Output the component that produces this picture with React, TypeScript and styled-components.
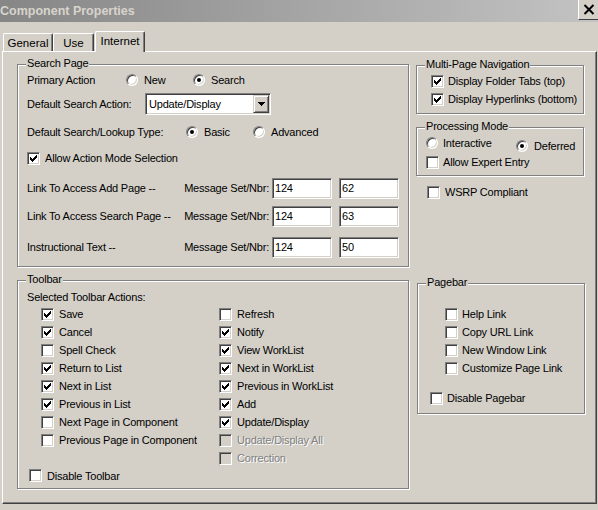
import React from "react";
import styled, { createGlobalStyle } from "styled-components";

const GlobalStyle = createGlobalStyle`
  html, body { margin: 0; padding: 0; background: #d4d0c8; }
  * { box-sizing: border-box; }
`;

const Window = styled.div`
  width: 598px;
  height: 510px;
  overflow: hidden;
  background: #d4d0c8;
  font-family: "Liberation Sans", Arial, sans-serif;
  font-size: 11px;
  letter-spacing: -0.2px;
  color: #000;
  display: flex;
  flex-direction: column;
`;

const TitleBar = styled.div`
  height: 22px;
  flex: none;
  display: flex;
  align-items: center;
  justify-content: space-between;
  background: linear-gradient(to right, #868686, #c3c3c3);
`;

const TitleText = styled.span`
  margin-left: 0;
  font-weight: bold;
  font-size: 12.5px;
  letter-spacing: 0;
  color: #d8d4cc;
  white-space: nowrap;
`;

const CloseButton = styled.div`
  width: 20px;
  height: 20px;
  align-self: flex-start;
  display: flex;
  align-items: center;
  justify-content: center;
  background: #d4d0c8;
  border-left: 1px solid #fff;
  border-bottom: 1px solid #404040;
`;

const TabStrip = styled.div`
  height: 29px;
  flex: none;
  display: flex;
  align-items: flex-end;
  padding-left: 3px;
  position: relative;
  z-index: 1;
`;

const Tab = styled.div<{ $active?: boolean; $w: number; $ml?: number }>`
  width: ${(p) => p.$w}px;
  height: ${(p) => (p.$active ? 21 : 18)}px;
  margin-left: ${(p) => p.$ml ?? 0}px;
  margin-bottom: ${(p) => (p.$active ? -1 : 0)}px;
  background: #d4d0c8;
  border-top: 1px solid #fff;
  border-left: 1px solid #fff;
  border-right: 1px solid #404040;
  box-shadow: inset -1px 0 #808080;
  border-top-left-radius: 2px;
  border-top-right-radius: 2px;
  display: flex;
  justify-content: center;
  padding-top: 3px;
  line-height: 13px;
  font-size: 11.5px;
  letter-spacing: 0;
  white-space: nowrap;
`;

const Panel = styled.div`
  margin-left: 2px;
  width: 595px;
  height: 453px;
  flex: none;
  border-top: 1px solid #fff;
  border-left: 1px solid #fff;
  border-right: 1px solid #404040;
  border-bottom: 1px solid #404040;
  box-shadow: inset -1px -1px #808080;
  display: grid;
  grid-template-columns: 392px 168px;
  column-gap: 7px;
  align-items: start;
  padding: 12px 0 0 14px;
`;

const Column = styled.div`
  display: flex;
  flex-direction: column;
`;

const Group = styled.div<{ $h: number; $mt?: number; $ml?: number; $w?: number }>`
  position: relative;
  width: ${(p) => (p.$w ? `${p.$w}px` : "100%")};
  height: ${(p) => p.$h}px;
  margin-top: ${(p) => p.$mt ?? 0}px;
  margin-left: ${(p) => p.$ml ?? 0}px;
  border: 1px solid #808080;
  box-shadow: inset 1px 1px #fff, 1px 1px #fff;
  display: flex;
  flex-direction: column;
  flex: none;
`;

const Legend = styled.span`
  position: absolute;
  top: -8px;
  left: 8px;
  padding: 0 1px;
  line-height: 13px;
  background: #d4d0c8;
  white-space: nowrap;
`;

const Row = styled.div<{ $h: number; $mt?: number; $pl?: number }>`
  display: flex;
  align-items: center;
  flex: none;
  height: ${(p) => p.$h}px;
  margin-top: ${(p) => p.$mt ?? 0}px;
  padding-left: ${(p) => p.$pl ?? 0}px;
  white-space: nowrap;
`;

const Label = styled.span<{ $w?: number; $right?: boolean }>`
  flex: none;
  width: ${(p) => (p.$w ? `${p.$w}px` : "auto")};
  text-align: ${(p) => (p.$right ? "right" : "left")};
  white-space: nowrap;
`;

const Option = styled.label<{ $w?: number; $gap: number; $disabled?: boolean; $drop?: number }>`
  display: flex;
  align-items: center;
  flex: none;
  gap: ${(p) => p.$gap}px;
  width: ${(p) => (p.$w ? `${p.$w}px` : "auto")};
  padding-top: ${(p) => p.$drop ?? 0}px;
  white-space: nowrap;
  color: ${(p) => (p.$disabled ? "#808080" : "#000")};
  text-shadow: ${(p) => (p.$disabled ? "1px 1px 0 #fff" : "none")};
`;

const Box = styled.span<{ $disabled?: boolean }>`
  width: 13px;
  height: 13px;
  flex: none;
  display: flex;
  align-items: center;
  justify-content: center;
  background: ${(p) => (p.$disabled ? "#d4d0c8" : "#fff")};
  border: 1px solid;
  border-color: #808080 #fff #fff #808080;
  box-shadow: inset 1px 1px #404040, inset -1px -1px #d4d0c8;
`;

const RadioCircle = styled(Box)`
  width: 12px;
  height: 12px;
  border-radius: 50%;
`;

const Dot = styled.span`
  width: 4px;
  height: 4px;
  border-radius: 50%;
  background: #000;
`;

const Select = styled.div`
  width: 126px;
  height: 22px;
  flex: none;
  background: #fff;
  border: 1px solid;
  border-color: #808080 #fff #fff #808080;
  box-shadow: inset 1px 1px #404040, inset -1px -1px #d4d0c8;
  display: flex;
  align-items: center;
  padding: 1px;
`;

const SelectText = styled.span`
  flex: 1;
  padding-left: 2px;
`;

const SelectButton = styled.span`
  width: 16px;
  height: 18px;
  flex: none;
  background: #d4d0c8;
  border: 1px solid;
  border-color: #d4d0c8 #404040 #404040 #d4d0c8;
  box-shadow: inset 1px 1px #fff, inset -1px -1px #808080;
  display: flex;
  align-items: center;
  justify-content: center;
`;

const TextBox = styled.input<{ $ml: number }>`
  width: 60px;
  height: 21px;
  flex: none;
  margin: 0 0 0 ${(p) => p.$ml}px;
  padding: 0 0 0 2px;
  background: #fff;
  border: 1px solid;
  border-color: #808080 #fff #fff #808080;
  box-shadow: inset 1px 1px #404040, inset -1px -1px #d4d0c8;
  font: inherit;
  letter-spacing: inherit;
  color: #000;
  outline: none;
`;

const CheckColumns = styled.div`
  display: flex;
  padding-left: 23px;
  flex: none;
`;

const CheckColumn = styled.div<{ $w?: number }>`
  display: flex;
  flex-direction: column;
  width: ${(p) => (p.$w ? `${p.$w}px` : "auto")};
`;

const CheckMark = () => (
  <svg width="7" height="7" viewBox="0 0 7 7" shapeRendering="crispEdges">
    <path
      fill="#000"
      d="M6 0h1v1h-1z M5 1h2v1h-2z M0 2h1v1h-1z M4 2h3v1h-3z M0 3h2v1h-2z M3 3h3v1h-3z M0 4h5v1h-5z M1 5h3v1h-3z M2 6h1v1h-1z"
    />
  </svg>
);

const Check: React.FC<{ label: string; checked?: boolean; disabled?: boolean; gap?: number }> = ({
  label,
  checked,
  disabled,
  gap = 5,
}) => (
  <Option $gap={gap} $disabled={disabled}>
    <Box $disabled={disabled}>{checked && <CheckMark />}</Box>
    <span>{label}</span>
  </Option>
);

const Radio: React.FC<{ label: string; checked?: boolean; w?: number; gap?: number; drop?: number }> = ({
  label,
  checked,
  w,
  gap = 6,
  drop,
}) => (
  <Option $gap={gap} $w={w} $drop={drop}>
    <RadioCircle>{checked && <Dot />}</RadioCircle>
    <span>{label}</span>
  </Option>
);

const MsgRow: React.FC<{ label: string; a: string; b: string; mt: number }> = ({ label, a, b, mt }) => (
  <Row $h={22} $mt={mt} $pl={9}>
    <Label $w={155}>{label}</Label>
    <Label $w={87} $right>
      Message Set/Nbr:
    </Label>
    <TextBox $ml={3} value={a} readOnly />
    <TextBox $ml={7} value={b} readOnly />
  </Row>
);

const toolbarLeft: [string, boolean][] = [
  ["Save", true],
  ["Cancel", true],
  ["Spell Check", false],
  ["Return to List", true],
  ["Next in List", true],
  ["Previous in List", true],
  ["Next Page in Component", false],
  ["Previous Page in Component", false],
];

const toolbarRight: [string, boolean, boolean][] = [
  ["Refresh", false, false],
  ["Notify", true, false],
  ["View WorkList", true, false],
  ["Next in WorkList", true, false],
  ["Previous in WorkList", true, false],
  ["Add", true, false],
  ["Update/Display", true, false],
  ["Update/Display All", false, true],
  ["Correction", false, true],
];

const pagebarItems = ["Help Link", "Copy URL Link", "New Window Link", "Customize Page Link"];

export default function App() {
  return (
    <Window>
      <GlobalStyle />
      <TitleBar>
        <TitleText>Component Properties</TitleText>
        <CloseButton>
          <svg width="12" height="11" viewBox="0 0 12 11">
            <path d="M1.5 1 L10.5 10 M10.5 1 L1.5 10" stroke="#000" strokeWidth="2" />
          </svg>
        </CloseButton>
      </TitleBar>
      <TabStrip>
        <Tab $w={50}>General</Tab>
        <Tab $w={41}>Use</Tab>
        <Tab $w={50} $ml={1} $active>
          Internet
        </Tab>
      </TabStrip>
      <Panel>
        <Column>
          <Group $h={203}>
            <Legend>Search Page</Legend>
            <Row $h={20} $mt={5} $pl={9}>
              <Label $w={99}>Primary Action</Label>
              <Radio label="New" w={67} />
              <Radio label="Search" checked />
            </Row>
            <Row $h={22} $mt={3} $pl={9}>
              <Label $w={118}>Default Search Action:</Label>
              <Select>
                <SelectText>Update/Display</SelectText>
                <SelectButton>
                  <svg width="7" height="4" viewBox="0 0 7 4" shapeRendering="crispEdges">
                    <path d="M0 0h7v1h-7z M1 1h5v1h-5z M2 2h3v1h-3z M3 3h1v1h-1z" fill="#000" />
                  </svg>
                </SelectButton>
              </Select>
            </Row>
            <Row $h={20} $mt={7} $pl={9}>
              <Label $w={159}>Default Search/Lookup Type:</Label>
              <Radio label="Basic" checked w={67} />
              <Radio label="Advanced" />
            </Row>
            <Row $h={20} $mt={6} $pl={9}>
              <Check label="Allow Action Mode Selection" checked />
            </Row>
            <MsgRow label="Link To Access Add Page --" a="124" b="62" mt={9} />
            <MsgRow label="Link To Access Search Page --" a="124" b="63" mt={6} />
            <MsgRow label="Instructional Text --" a="124" b="50" mt={9} />
          </Group>

          <Group $h={209} $mt={13}>
            <Legend>Toolbar</Legend>
            <Row $h={17} $mt={7} $pl={9}>
              Selected Toolbar Actions:
            </Row>
            <CheckColumns>
              <CheckColumn $w={178}>
                {toolbarLeft.map(([label, checked]) => (
                  <Row key={label} $h={18}>
                    <Check label={label} checked={checked} />
                  </Row>
                ))}
              </CheckColumn>
              <CheckColumn>
                {toolbarRight.map(([label, checked, disabled]) => (
                  <Row key={label} $h={18}>
                    <Check label={label} checked={checked} disabled={disabled} />
                  </Row>
                ))}
              </CheckColumn>
            </CheckColumns>
            <Row $h={17} $pl={11}>
              <Check label="Disable Toolbar" />
            </Row>
          </Group>
        </Column>

        <Column>
          <Group $h={49} $mt={1} $w={168}>
            <Legend>Multi-Page Navigation</Legend>
            <Row $h={18} $mt={6} $pl={14}>
              <Check label="Display Folder Tabs (top)" checked gap={4} />
            </Row>
            <Row $h={18} $pl={14}>
              <Check label="Display Hyperlinks (bottom)" checked gap={4} />
            </Row>
          </Group>

          <Group $h={49} $mt={13} $w={168}>
            <Legend>Processing Mode</Legend>
            <Row $h={18} $mt={6} $pl={9}>
              <Radio label="Interactive" w={90} gap={5} />
              <Radio label="Deferred" checked drop={5} />
            </Row>
            <Row $h={18} $mt={1} $pl={9}>
              <Check label="Allow Expert Entry" gap={4} />
            </Row>
          </Group>

          <Row $h={16} $mt={8} $pl={11}>
            <Check label="WSRP Compliant" />
          </Row>

          <Group $h={131} $mt={83} $ml={1} $w={168}>
            <Legend>Pagebar</Legend>
            <CheckColumn>
              {pagebarItems.map((label, i) => (
                <Row key={label} $h={18} $mt={i === 0 ? 21 : 0} $pl={27}>
                  <Check label={label} gap={4} />
                </Row>
              ))}
            </CheckColumn>
            <Row $h={18} $mt={12} $pl={12}>
              <Check label="Disable Pagebar" gap={4} />
            </Row>
          </Group>
        </Column>
      </Panel>
    </Window>
  );
}
